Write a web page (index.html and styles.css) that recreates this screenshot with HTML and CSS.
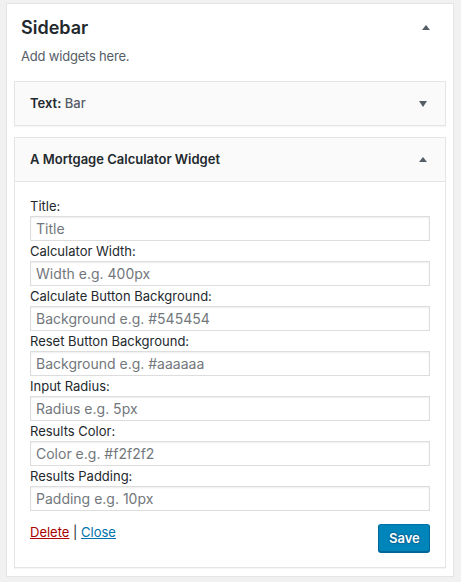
FILE: index.html
```html
<!DOCTYPE html>
<html>
<head>
<meta charset="utf-8">
<link rel="stylesheet" href="styles.css">
</head>
<body>
<div class="sidebar">
  <div class="sidebar-head">
    <h2 class="sidebar-title">Sidebar</h2>
    <span class="arrow arrow-up sidebar-arrow"></span>
  </div>
  <p class="sidebar-desc">Add widgets here.</p>

  <div class="widget">
    <div class="widget-top">
      <h3 class="widget-title">Text:<span class="in-title"> Bar</span></h3>
      <span class="arrow arrow-down"></span>
    </div>
  </div>

  <div class="widget widget-open">
    <div class="widget-top widget-top-open">
      <h3 class="widget-title">A Mortgage Calculator Widget</h3>
      <span class="arrow arrow-up"></span>
    </div>
    <div class="widget-inside">
      <div class="field"><label class="field-label">Title:</label><input class="field-input" placeholder="Title"></div>
      <div class="field"><label class="field-label">Calculator Width:</label><input class="field-input" placeholder="Width e.g. 400px"></div>
      <div class="field"><label class="field-label">Calculate Button Background:</label><input class="field-input" placeholder="Background e.g. #545454"></div>
      <div class="field"><label class="field-label">Reset Button Background:</label><input class="field-input" placeholder="Background e.g. #aaaaaa"></div>
      <div class="field"><label class="field-label">Input Radius:</label><input class="field-input" placeholder="Radius e.g. 5px"></div>
      <div class="field"><label class="field-label">Results Color:</label><input class="field-input" placeholder="Color e.g. #f2f2f2"></div>
      <div class="field"><label class="field-label">Results Padding:</label><input class="field-input" placeholder="Padding e.g. 10px"></div>
      <div class="widget-actions">
        <div class="links"><a class="link-delete" href="#">Delete</a> | <a class="link-close" href="#">Close</a></div>
        <button class="btn-save">Save</button>
      </div>
    </div>
  </div>
</div>
</body>
</html>
```
FILE: styles.css
```css
html, body {
  margin: 0;
  padding: 0;
}
body {
  background: #f1f1f1;
  font-family: Inter, "Liberation Sans", sans-serif;
  font-size: 13px;
  color: #23282d;
  padding: 3px 0 0 6px;
}
.sidebar {
  width: 448px;
  box-sizing: border-box;
  background: #fff;
  border: 1px solid #e5e5e5;
  box-shadow: 0 1px 1px rgba(0,0,0,.04);
  padding: 12px 7px 8px;
}
.sidebar-head {
  display: flex;
  align-items: center;
  justify-content: space-between;
  padding: 0 16px 0 7px;
}
.sidebar-title {
  margin: 0;
  font-size: 18px;
  line-height: 24px;
  font-weight: 600;
  color: #23282d;
}
.sidebar-arrow {
  margin-top: -2px;
}
.sidebar-desc {
  margin: 6px 0 0 7px;
  line-height: 20px;
  color: #555d66;
  letter-spacing: -0.2px;
}
.arrow {
  width: 0;
  height: 0;
  border-left: 4px solid transparent;
  border-right: 4px solid transparent;
}
.arrow-up {
  border-bottom: 5px solid #555d66;
}
.arrow-down {
  border-top: 6px solid #555d66;
}
.widget {
  margin-top: 15px;
  border: 1px solid #e5e5e5;
  box-shadow: 0 1px 1px rgba(0,0,0,.04);
  background: #fff;
}
.widget-open {
  margin-top: 11px;
}
.widget-top {
  background: #fafafa;
  display: flex;
  align-items: center;
  justify-content: space-between;
  padding: 0 18px 0 15px;
  height: 43px;
}
.widget-top-open {
  border-bottom: 1px solid #e5e5e5;
}
.widget-title {
  margin: 0;
  font-size: 13px;
  line-height: 13px;
  font-weight: 600;
  color: #23282d;
}
.in-title {
  color: #555d66;
  font-weight: 500;
}
.widget-inside {
  padding: 14px 15px 15px;
}
.field {
  display: flex;
  flex-direction: column;
}
.field-label {
  line-height: 20px;
  color: #23282d;
}
.field-input {
  box-sizing: border-box;
  height: 25px;
  width: 100%;
  margin: 0;
  border: 1px solid #ddd;
  box-shadow: inset 0 1px 2px rgba(0,0,0,.07);
  padding: 0 5px;
  font-family: inherit;
  font-size: 14px;
  color: #32373c;
  background: #fff;
  outline: none;
}
.field-input::placeholder {
  color: #72777c;
}
.widget-actions {
  display: flex;
  justify-content: space-between;
  align-items: flex-start;
  margin-top: 13px;
}
.links {
  line-height: 16px;
  color: #23282d;
}
.link-delete {
  color: #a00;
}
.link-close {
  color: #0073aa;
}
.btn-save {
  box-sizing: border-box;
  height: 28px;
  width: 52px;
  padding: 0 10px;
  background: #0085ba;
  border: 1px solid;
  border-color: #0073aa #006799 #006799;
  border-radius: 3px;
  box-shadow: 0 1px 0 #006799;
  color: #fff;
  font-family: inherit;
  font-size: 13px;
  font-weight: 600;
  text-shadow: 0 -1px 1px #006799, 1px 0 1px #006799, 0 1px 1px #006799, -1px 0 1px #006799;
}
```
